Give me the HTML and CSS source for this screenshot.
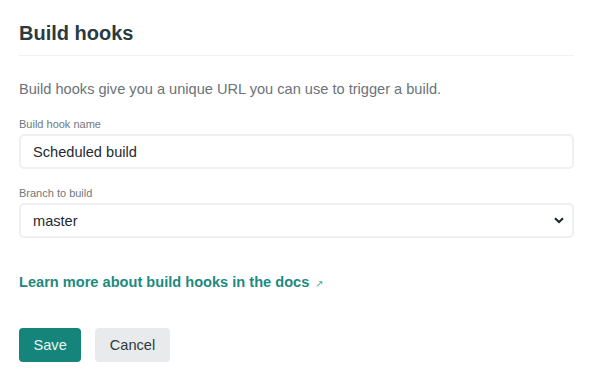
FILE: index.html
```html
<!DOCTYPE html>
<html lang="en">
<head>
  <meta charset="UTF-8">
  <meta name="viewport" content="width=device-width, initial-scale=1.0">
  <title>Build hooks</title>
  <link rel="stylesheet" href="styles.css">
</head>
<body>
  <div class="panel">
    <h2 class="panel-title">Build hooks</h2>
    <div class="panel-body">
      <p class="intro">Build hooks give you a unique URL you can use to trigger a build.</p>
      <form class="hook-form">
        <div class="form-group">
          <label for="hookName">Build hook name</label>
          <input type="text" id="hookName" class="field" value="Scheduled build">
        </div>
        <div class="form-group">
          <label for="hookBranch">Branch to build</label>
          <div class="select-wrap">
            <select id="hookBranch" class="field">
              <option>master</option>
            </select>
            <svg class="chevron" width="10" height="7" viewBox="0 0 10 7"><path d="M1 1.2 L5 5 L9 1.2" fill="none" stroke="#1f2a30" stroke-width="2.2"/></svg>
          </div>
        </div>
        <a class="docs-link" href="#">Learn more about build hooks in the docs <span class="arrow">&#8599;</span></a>
        <div class="actions">
          <button type="submit" class="btn btn-save">Save</button>
          <button type="button" class="btn btn-cancel">Cancel</button>
        </div>
      </form>
    </div>
  </div>
</body>
</html>
```

FILE: styles.css
```css
body {
  margin: 0;
  background: #fff;
  font-family: "Liberation Sans", Arial, sans-serif;
  color: #2e3a40;
}

.panel {
  padding: 0 20px 0 19px;
}

/* Header with thin divider */
.panel-title {
  margin: 0;
  padding: 22px 0 10px;
  font-size: 20px;
  line-height: 23px;
  font-weight: bold;
  color: #2b3a42;
  border-bottom: 1px solid #f1f2f3;
}

.panel-body {
  padding-top: 24px;
}

.intro {
  margin: 0 0 20px;
  font-size: 14.6px;
  line-height: 18px;
  color: #6b7378;
}

.form-group {
  margin-bottom: 18px;
}

.form-group label {
  display: block;
  font-size: 11px;
  line-height: 13px;
  color: #6f787e;
  margin-bottom: 3px;
}

.field {
  display: block;
  box-sizing: border-box;
  width: 100%;
  height: 35px;
  padding: 0 12px;
  border: 2px solid #eeeff0;
  border-radius: 5px;
  background: #fff;
  font-family: inherit;
  font-size: 14.6px;
  color: #1f2a30;
  outline: none;
}

.select-wrap {
  position: relative;
}

select.field {
  appearance: none;
  -webkit-appearance: none;
}

.chevron {
  position: absolute;
  right: 10px;
  top: 14px;
  pointer-events: none;
}

.docs-link {
  display: inline-block;
  margin-top: 18px;
  font-size: 14.6px;
  font-weight: bold;
  color: #1d8a80;
  text-decoration: none;
}

.docs-link .arrow {
  font-size: 10px;
  font-weight: normal;
  color: #3fa79c;
  margin-left: 2px;
}

.actions {
  display: flex;
  gap: 14px;
  margin-top: 37px;
}

.btn {
  height: 34px;
  padding: 0 14.5px;
  border: none;
  border-radius: 4px;
  font-family: inherit;
  font-size: 14.6px;
  cursor: pointer;
}

.btn-save {
  background: #15847a;
  color: #eaf5f3;
}

.btn-cancel {
  background: #e9eaeb;
  color: #2e3a40;
}
```
